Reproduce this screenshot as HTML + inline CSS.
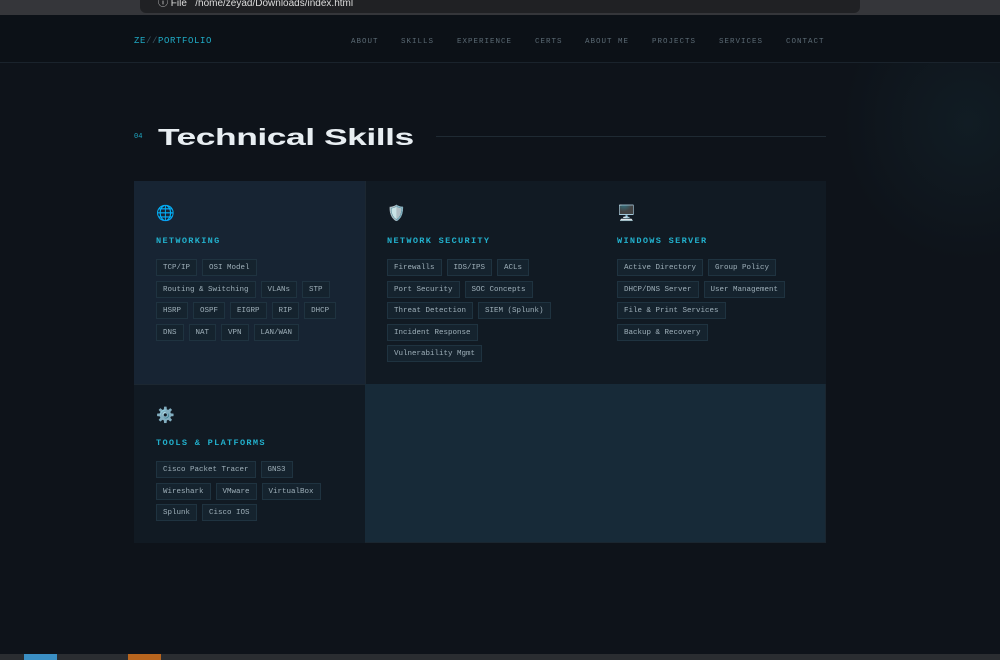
<!DOCTYPE html>
<html><head><meta charset="utf-8"><style>
*{margin:0;padding:0;box-sizing:border-box}
body{width:1000px;height:660px;overflow:hidden;background:#0e131a;font-family:"Liberation Mono",monospace;position:relative}
.chrome{position:absolute;left:0;top:0;width:1000px;height:15px;background:#35363a}
.url{position:absolute;left:140px;top:0;width:720px;height:13px;background:#202124;border-radius:0 0 6px 6px;color:#ddd;font-family:"Liberation Sans",sans-serif;font-size:10px;line-height:8px;padding-left:18px}
.nav{position:absolute;left:0;top:15px;width:1000px;height:48px;background:#0c1117;border-bottom:1px solid #1a232c}
.logo{position:absolute;left:134px;top:21px;font-size:9px;color:#1fa9c4;letter-spacing:.6px}
.logo span{color:#3a5563}
.links{position:absolute;left:351px;top:23px;font-size:7.5px;color:#5c6b75;letter-spacing:1px}
.links b{font-weight:normal;position:absolute;white-space:nowrap}
.glow{position:absolute;left:840px;top:63px;width:160px;height:200px;background:radial-gradient(ellipse at 80% 30%,rgba(30,70,80,.18),transparent 70%)}
.num{position:absolute;left:134px;top:133px;font-size:7px;color:#1fa9c4}
.title{position:absolute;left:158px;top:124px;font-family:"Liberation Sans",sans-serif;font-weight:bold;font-size:23px;line-height:26px;color:#e8eef2;transform:scaleX(1.54);transform-origin:left;letter-spacing:-.3px}
.rule{position:absolute;left:436px;top:136px;width:390px;height:1px;background:#1f2a33}
.cell{position:absolute;padding:22px 0 0 22px}
.ic{font-size:15px;height:20px;line-height:20px;font-family:"DejaVu Sans",sans-serif}
.h{margin-top:13px;font-size:8.6px;font-weight:bold;color:#22b0cc;letter-spacing:1.3px}
.tags{margin-top:13px;display:flex;flex-wrap:wrap;gap:4.5px 5px;width:185px}
.t{height:17px;line-height:17px;padding:0 6px;font-size:7.5px;color:#9fb0ba;background:#15232e;border:1px solid #1f3340}
</style></head><body>
<div class="chrome"><div class="url">ⓘ File &nbsp; /home/zeyad/Downloads/index.html</div></div>
<div class="nav">
<div class="logo">ZE<span>//</span>PORTFOLIO</div>
<div class="links"><b style="left:0">ABOUT</b><b style="left:50px">SKILLS</b><b style="left:106px">EXPERIENCE</b><b style="left:184px">CERTS</b><b style="left:234px">ABOUT ME</b><b style="left:301px">PROJECTS</b><b style="left:368px">SERVICES</b><b style="left:435px">CONTACT</b></div>
</div>
<div class="glow"></div>
<div class="num">04</div>
<div class="title">Technical Skills</div>
<div class="rule"></div>
<div style="position:absolute;left:134px;top:181px;width:692px;height:362px;background:#172a38;border:1px solid #1a2630"></div>
<div class="cell" style="left:134px;top:181px;width:231px;height:203px;background:#172433">
<div class="ic">🌐</div><div class="h">NETWORKING</div>
<div class="tags"><span class="t">TCP/IP</span><span class="t">OSI Model</span><span class="t">Routing &amp; Switching</span><span class="t">VLANs</span><span class="t">STP</span><span class="t">HSRP</span><span class="t">OSPF</span><span class="t">EIGRP</span><span class="t">RIP</span><span class="t">DHCP</span><span class="t">DNS</span><span class="t">NAT</span><span class="t">VPN</span><span class="t">LAN/WAN</span></div></div>
<div class="cell" style="left:365px;top:181px;width:231px;height:203px;background:#111a23;border-left:1px solid #1c2731;padding-left:21px">
<div class="ic">🛡️</div><div class="h">NETWORK SECURITY</div>
<div class="tags" style="width:170px"><span class="t">Firewalls</span><span class="t">IDS/IPS</span><span class="t">ACLs</span><span class="t">Port Security</span><span class="t">SOC Concepts</span><span class="t">Threat Detection</span><span class="t">SIEM (Splunk)</span><span class="t">Incident Response</span><span class="t">Vulnerability Mgmt</span></div></div>
<div class="cell" style="left:596px;top:181px;width:230px;height:203px;background:#111a23;padding-left:21px">
<div class="ic">🖥️</div><div class="h">WINDOWS SERVER</div>
<div class="tags" style="width:180px"><span class="t">Active Directory</span><span class="t">Group Policy</span><span class="t">DHCP/DNS Server</span><span class="t">User Management</span><span class="t">File &amp; Print Services</span><span class="t">Backup &amp; Recovery</span></div></div>
<div class="cell" style="left:134px;top:384px;width:231px;height:159px;background:#111a23;border-top:1px solid #1c2731;padding-top:20px">
<div class="ic">⚙️</div><div class="h">TOOLS &amp; PLATFORMS</div>
<div class="tags" style="width:175px"><span class="t">Cisco Packet Tracer</span><span class="t">GNS3</span><span class="t">Wireshark</span><span class="t">VMware</span><span class="t">VirtualBox</span><span class="t">Splunk</span><span class="t">Cisco IOS</span></div></div>
<div style="position:absolute;left:0;top:654px;width:1000px;height:6px;background:#2a2d31"></div>
<div style="position:absolute;left:24px;top:654px;width:33px;height:6px;background:#3a8fc4"></div>
<div style="position:absolute;left:128px;top:654px;width:33px;height:6px;background:#b8651e"></div>
</body></html>
